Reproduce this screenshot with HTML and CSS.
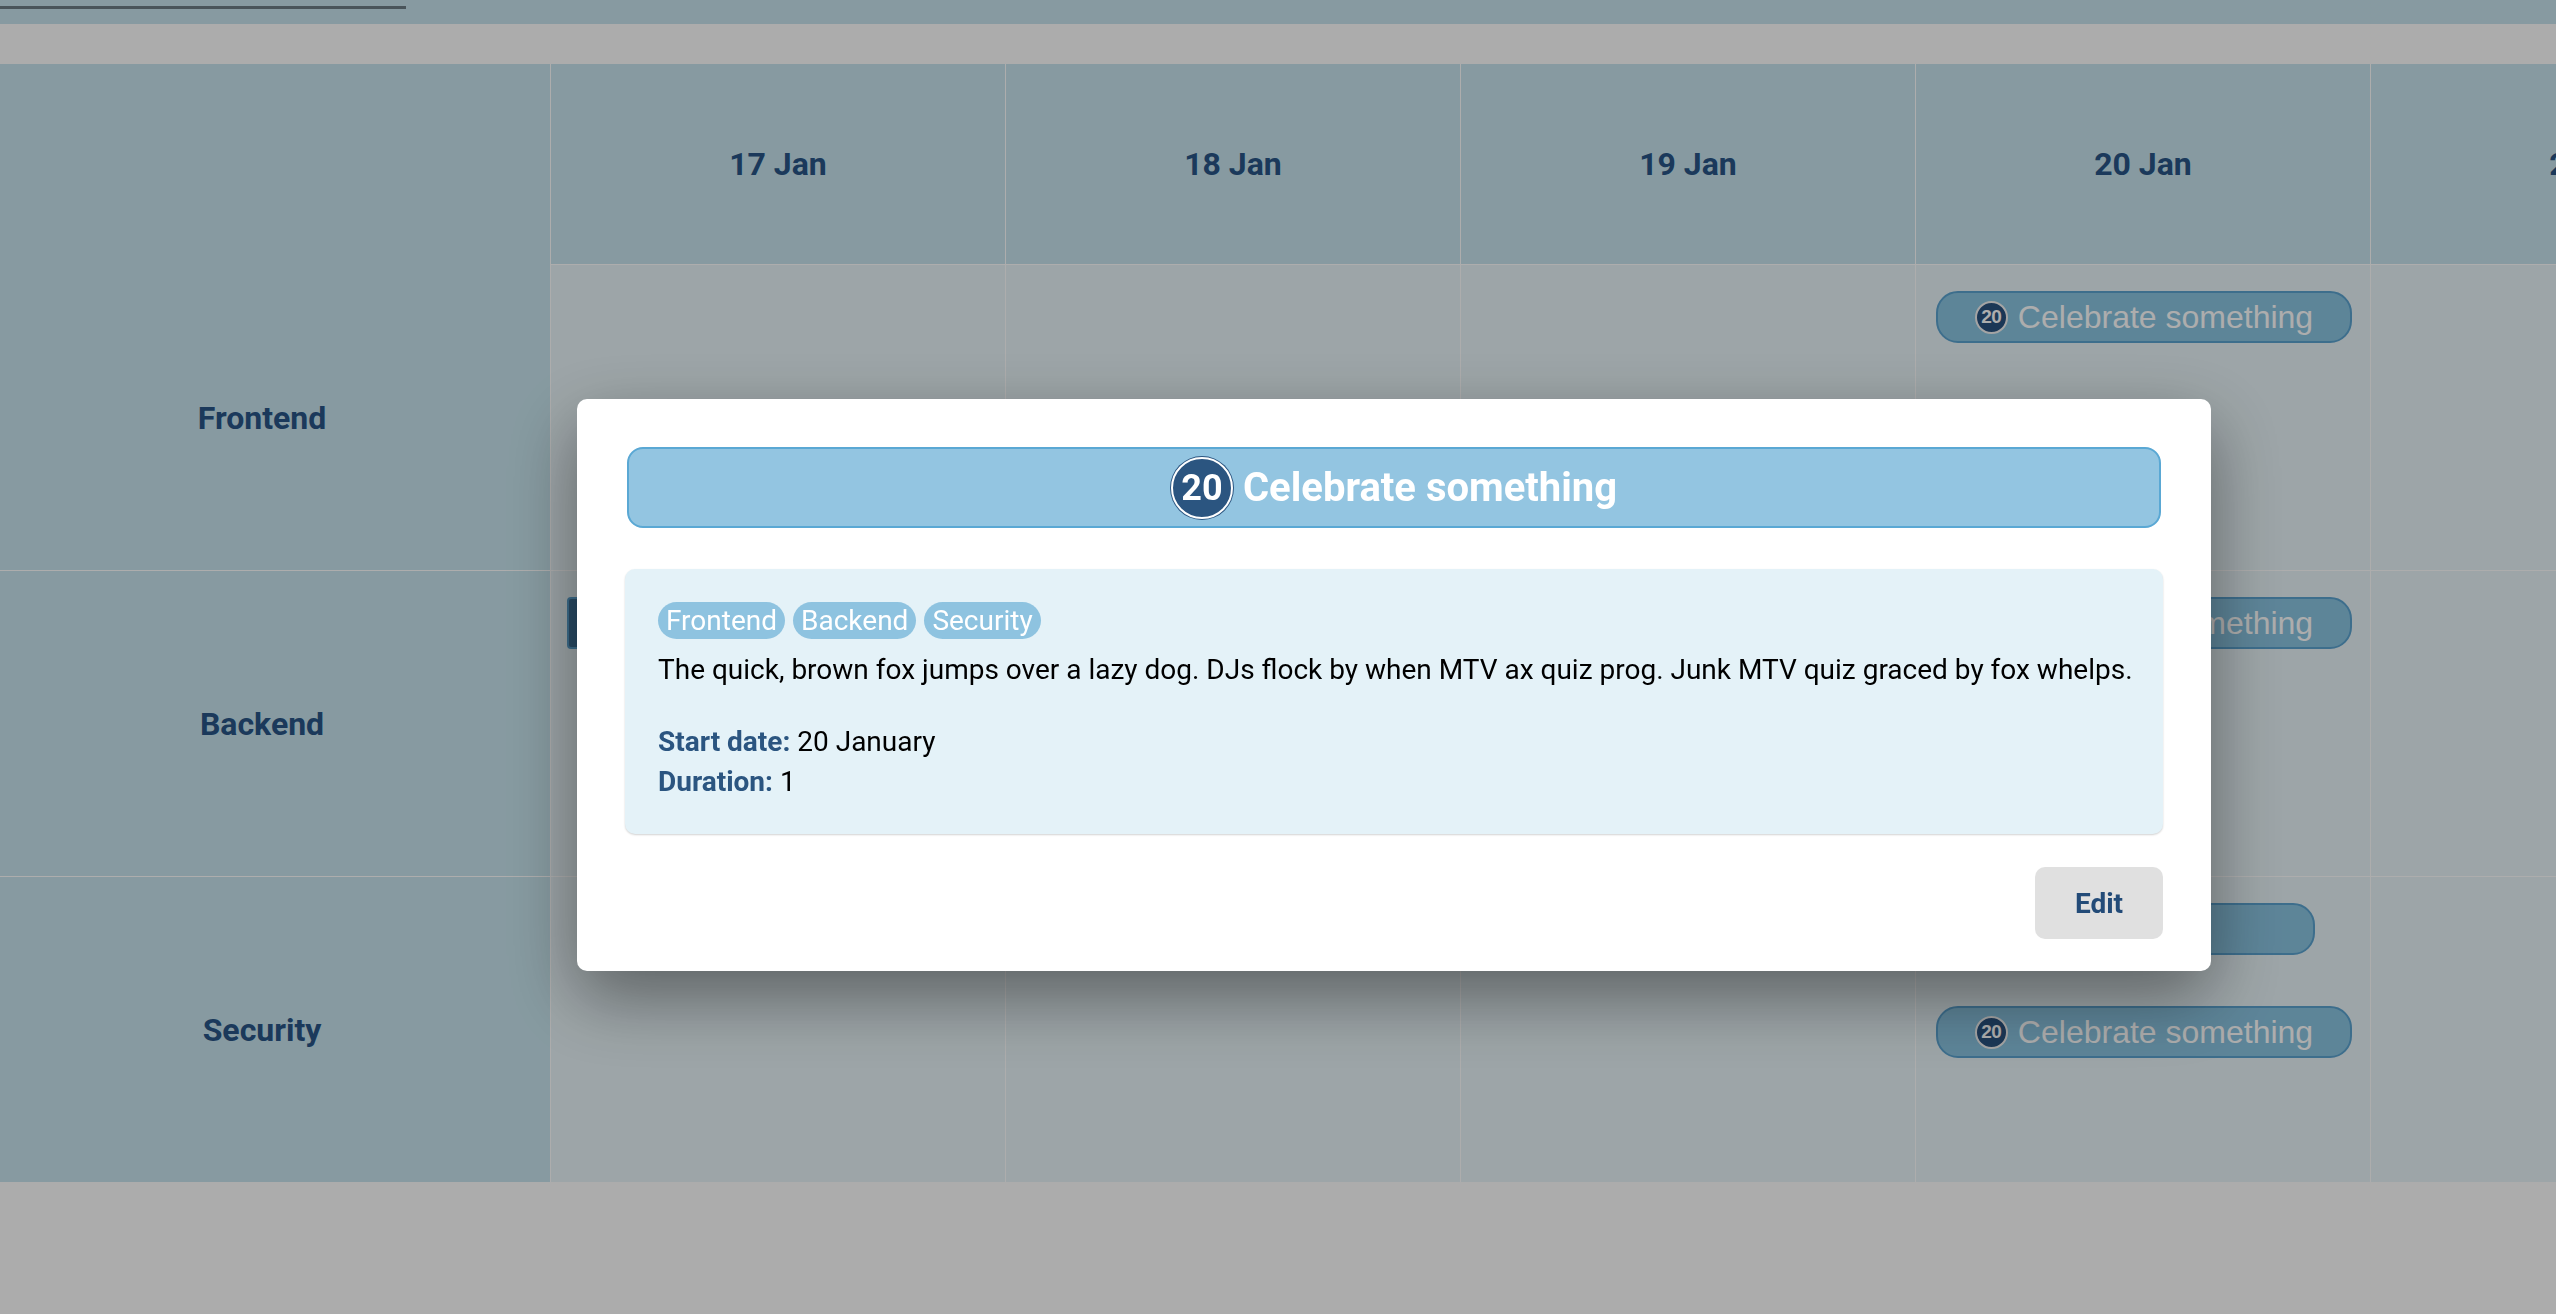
FILE: index.html
```html
<!DOCTYPE html>
<html lang="en">
<head>
<meta charset="utf-8">
<title>Timeline</title>
<link rel="stylesheet" href="styles.css">
</head>
<body>
<div class="page">
  <div class="topbar"><span class="tab-line"></span></div>
  <div class="calendar">
    <div class="cal-row head-row">
      <div class="label-cell"></div>
      <div class="day-head">17 Jan</div>
      <div class="day-head">18 Jan</div>
      <div class="day-head">19 Jan</div>
      <div class="day-head">20 Jan</div>
      <div class="day-head">21 Jan</div>
      <div class="day-head">22 Jan</div>
    </div>
    <div class="cal-row lane">
      <div class="label-cell">Frontend</div>
      <div class="day c2"></div><div class="day c3"></div><div class="day c4"></div><div class="day c5"></div><div class="day c6"></div><div class="day c7"></div>
      <div class="event s5 e6 r2"><span class="ev-badge">20</span>Celebrate something</div>
    </div>
    <div class="cal-row lane">
      <div class="label-cell">Backend</div>
      <div class="day c2"></div><div class="day c3"></div><div class="day c4"></div><div class="day c5"></div><div class="day c6"></div><div class="day c7"></div>
      <div class="event s2 e5 r2 long"><span class="ev-badge">17</span>Ship the release</div>
      <div class="event s5 e6 r2"><span class="ev-badge">20</span>Celebrate something</div>
    </div>
    <div class="cal-row lane">
      <div class="label-cell">Security</div>
      <div class="day c2"></div><div class="day c3"></div><div class="day c4"></div><div class="day c5"></div><div class="day c6"></div><div class="day c7"></div>
      <div class="event s3 e6 r2 short"><span class="ev-badge">18</span>Security audit</div>
      <div class="event s5 e6 r4"><span class="ev-badge">20</span>Celebrate something</div>
    </div>
  </div>
</div>

<div class="backdrop"></div>

<div class="modal" role="dialog">
  <h2 class="modal-title"><span class="title-badge">20</span>Celebrate something</h2>
  <div class="details">
    <div class="tags">
      <span class="tag">Frontend</span>
      <span class="tag">Backend</span>
      <span class="tag">Security</span>
    </div>
    <p class="desc">The quick, brown fox jumps over a lazy dog. DJs flock by when MTV ax quiz prog. Junk MTV quiz graced by fox whelps.</p>
    <div class="meta"><span class="meta-label">Start date:</span> 20 January</div>
    <div class="meta"><span class="meta-label">Duration:</span> 1</div>
  </div>
  <div class="actions">
    <button class="btn-edit">Edit</button>
  </div>
</div>
</body>
</html>
```
FILE: styles.css
```css
html, body {
  margin: 0;
  padding: 0;
  background: #fefefe;
  overflow: hidden;
  width: 2556px;
  height: 1314px;
  font-family: Roboto, "Liberation Sans", sans-serif;
}

.page {
  width: 2556px;
  overflow: hidden;
}

.topbar {
  height: 24px;
  background: #c7e4ed;
  position: relative;
  margin-bottom: 40px;
}

.tab-line {
  display: block;
  position: absolute;
  left: 0;
  top: 6px;
  width: 406px;
  height: 3px;
  background: #6c7d85;
}

.calendar {
  display: flex;
  flex-direction: column;
  gap: 1px;
  background: #ffffff;
  width: 3300px;
}

.cal-row {
  display: grid;
  grid-template-columns: 550px repeat(6, 454px);
  column-gap: 1px;
  background: #ffffff;
}

.head-row {
  height: 200px;
}

.head-row .label-cell {
  margin-bottom: -2px;
}

.label-cell {
  background: #c7e4ed;
  display: flex;
  align-items: center;
  justify-content: center;
  padding-right: 26px;
  font-weight: 700;
  font-size: 32px;
  color: #295586;
  grid-row: 1 / -1;
  grid-column: 1;
}

.day-head {
  background: #c7e4ed;
  display: flex;
  align-items: center;
  justify-content: center;
  font-weight: 700;
  font-size: 32px;
  color: #295586;
}

.lane {
  height: 305px;
  grid-template-rows: 26px 52px 51px 52px 1fr;
}

.day {
  background: #e8f4f8;
  grid-row: 1 / -1;
}

.c2 { grid-column: 2; }
.c3 { grid-column: 3; }
.c4 { grid-column: 4; }
.c5 { grid-column: 5; }
.c6 { grid-column: 6; }
.c7 { grid-column: 7; }

.event {
  margin: 0 18px 0 20px;
  background: #8ac4e1;
  border: 2px solid #5aa2cf;
  border-radius: 22px;
  display: flex;
  align-items: center;
  justify-content: center;
  gap: 10px;
  color: #ffffff;
  font-family: "Liberation Sans", Arial, sans-serif;
  font-size: 32px;
  white-space: nowrap;
  overflow: hidden;
  box-sizing: border-box;
}

.event.long { margin-left: 16px; margin-right: 20px; border-radius: 4px; background: #3d6f95; }
.event.short { margin-right: 55px; }

.s2 { grid-column-start: 2; }
.s3 { grid-column-start: 3; }
.s5 { grid-column-start: 5; }
.e5 { grid-column-end: 5; }
.e6 { grid-column-end: 6; }
.r2 { grid-row: 2; }
.r4 { grid-row: 4; }

.ev-badge {
  width: 33px;
  height: 33px;
  box-sizing: border-box;
  border-radius: 50%;
  background: #29527f;
  border: 2px solid #f2f2f2;
  font-size: 19px;
  font-weight: 700;
  display: flex;
  align-items: center;
  justify-content: center;
  letter-spacing: -0.5px;
}

.backdrop {
  position: fixed;
  inset: 0;
  z-index: 10;
  background: rgba(0, 0, 0, 0.32);
}

.modal {
  position: fixed;
  z-index: 11;
  left: 577px;
  top: 399px;
  width: 1634px;
  box-sizing: border-box;
  padding: 48px 48px 32px 48px;
  background: #ffffff;
  border-radius: 10px;
  box-shadow: 0 26px 70px rgba(0, 0, 0, 0.42);
}

.modal-title {
  margin: 0 2px 41px 2px;
  height: 81px;
  box-sizing: border-box;
  background: #93c5e1;
  border: 2px solid #5aa8d4;
  border-radius: 16px;
  display: flex;
  align-items: center;
  justify-content: center;
  gap: 10px;
  color: #ffffff;
  font-size: 40px;
  font-weight: 700;
}

.title-badge {
  width: 62px;
  height: 62px;
  box-sizing: border-box;
  border-radius: 50%;
  background: #2b5580;
  border: 2px solid #ffffff;
  box-shadow: 0 0 0 1px #2b5580;
  display: flex;
  align-items: center;
  justify-content: center;
  font-size: 36px;
  font-weight: 700;
}

.details {
  background: #e4f2f8;
  border-radius: 10px;
  padding: 33px 32px 32px 33px;
  box-shadow: 0 1px 2px rgba(0, 0, 0, 0.18);
}

.tags {
  display: flex;
  gap: 8px;
  margin-bottom: 11px;
}

.tag {
  height: 37px;
  display: flex;
  align-items: center;
  padding: 0 8px;
  border-radius: 19px;
  background: #8ec3e0;
  color: #ffffff;
  font-size: 28px;
}

.desc {
  margin: 0 0 32px 0;
  font-size: 28px;
  line-height: 40px;
  color: #000000;
  white-space: nowrap;
}

.meta {
  font-size: 28px;
  line-height: 40px;
  color: #000000;
}

.meta-label {
  font-weight: 700;
  color: #2b5580;
}

.actions {
  display: flex;
  justify-content: flex-end;
  margin-top: 33px;
}

.btn-edit {
  width: 128px;
  height: 72px;
  border: none;
  border-radius: 10px;
  background: #e0e0e0;
  color: #234b78;
  font-family: Roboto, "Liberation Sans", sans-serif;
  font-size: 28px;
  font-weight: 700;
}
```
